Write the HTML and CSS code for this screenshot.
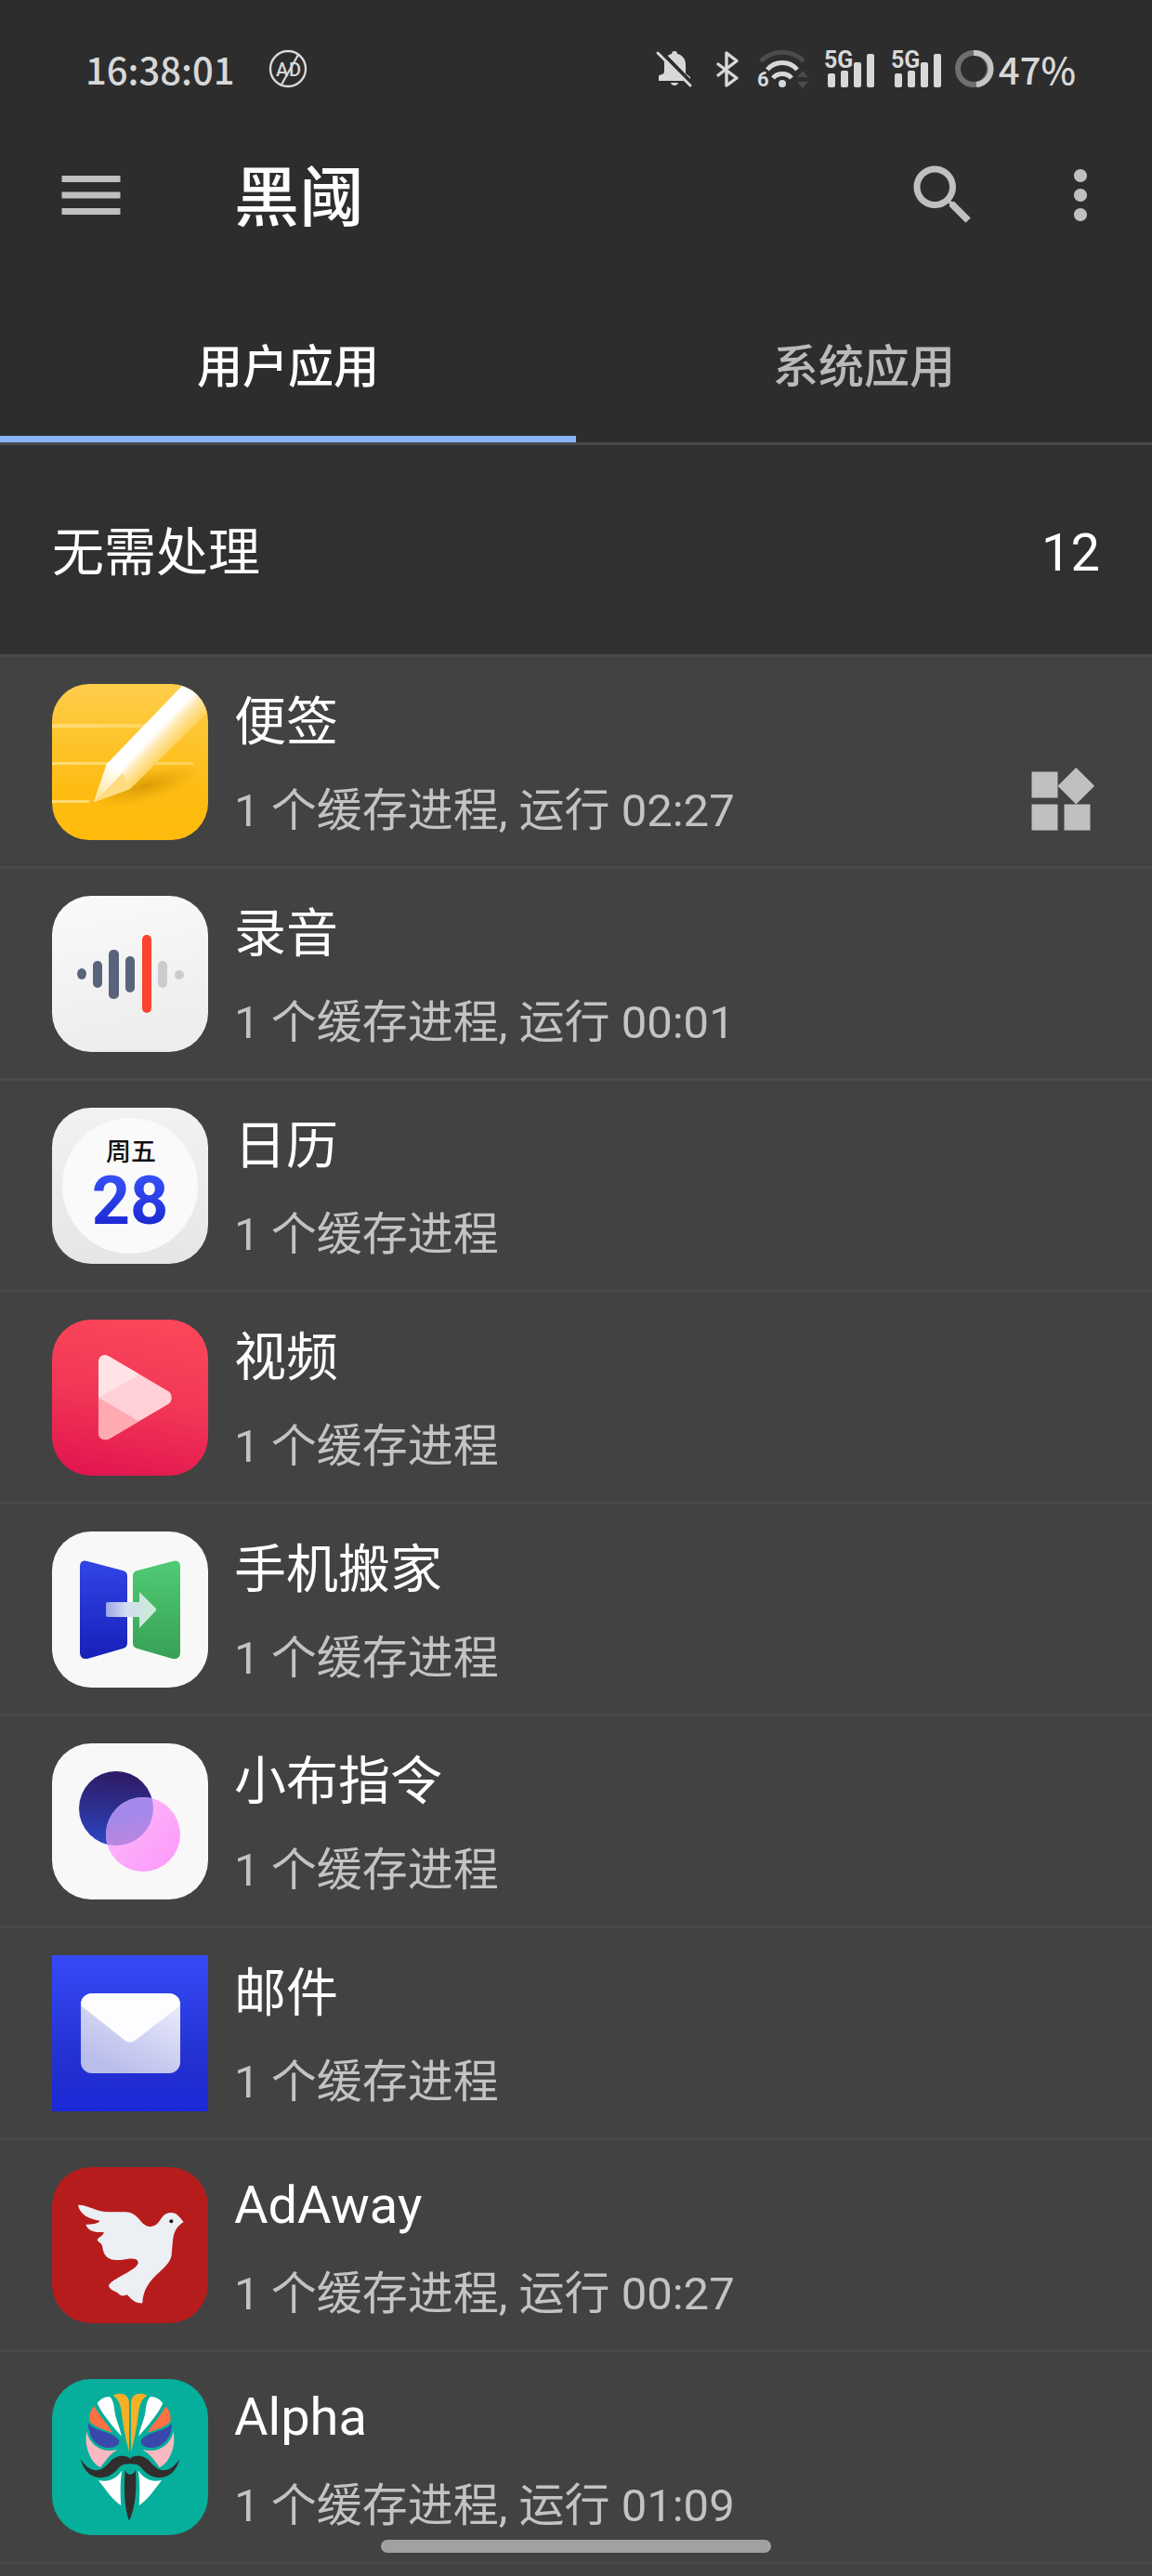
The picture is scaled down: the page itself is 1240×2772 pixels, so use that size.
FILE: index.html
```html
<!DOCTYPE html>
<html lang="zh-CN">

<head>
    <meta charset="UTF-8">
    <meta name="viewport" content="width=device-width, initial-scale=1.0">
    <title>黑阈</title>
    <link rel="stylesheet" href="styles.css">
</head>

<body>
    <!-- Status bar -->
    <div class="status-bar">
        <span class="clock">16:38:01</span>
        <svg class="ad-icon" width="42" height="42" viewBox="0 0 42 42">
            <circle cx="21" cy="21" r="19" fill="none" stroke="currentColor" stroke-width="2.4" />
            <path d="M14 38L32 6" stroke="currentColor" stroke-width="2.2" />
            <text x="8" y="29" font-size="20">A</text>
            <text x="22" y="29" font-size="20">D</text>
        </svg>

        <div class="status-icons">
            <svg class="bell" width="40" height="42" viewBox="0 0 40 42">
                <path d="M20 2c2 0 3 1 3 3 6 1 9 6 9 12v9l5 4v4H3v-5c0-2 6-1 6-5v-8c0-6 3-10 8-11 0-2 1-3 3-3z" fill="currentColor" />
                <path d="M16 36h8c-1 4-7 4-8 0z" fill="currentColor" />
                <path d="M4 1L40 38" stroke="#2d2d2d" stroke-width="4" />
                <path d="M2 4L37 39" stroke="currentColor" stroke-width="3" stroke-linecap="round" />
            </svg>
            <svg class="bluetooth" width="26" height="42" viewBox="0 0 26 42">
                <path d="M3 16L23 31L12 39V4L23 12.5L3 28" fill="none" stroke="currentColor" stroke-width="3.4" stroke-linejoin="round" stroke-linecap="round" />
            </svg>
            <svg class="wifi" width="56" height="42" viewBox="0 0 56 42">
                <g fill="none" stroke="currentColor" stroke-width="5">
                    <path d="M4 13c12-13 34-13 46 0" stroke="#4b4b4b" />
                    <path d="M11 22c8-10 24-10 32 0" />
                    <path d="M17 31c5-6 15-6 20 0" />
                </g>
                <circle cx="27" cy="37" r="4" fill="currentColor" />
                <text x="0" y="40" font-size="22" font-weight="700">6</text>
                <path d="M43 30l6-7 6 7zM43 35h12l-6 7z" fill="#4b4b4b" />
            </svg>
            <svg class="signal" width="56" height="42" viewBox="0 0 56 42">
                <text x="0" y="20" font-size="25" font-weight="700">5G</text>
                <g fill="currentColor">
                    <rect x="4" y="26" width="8" height="15" rx="2" />
                    <rect x="18" y="23" width="8" height="18" rx="2" />
                    <rect x="32" y="14" width="8" height="27" rx="2" />
                    <rect x="46" y="5" width="8" height="36" rx="2" />
                </g>
            </svg>
            <svg class="signal" width="56" height="42" viewBox="0 0 56 42">
                <text x="0" y="20" font-size="25" font-weight="700">5G</text>
                <g fill="currentColor">
                    <rect x="4" y="26" width="8" height="15" rx="2" />
                    <rect x="18" y="23" width="8" height="18" rx="2" />
                    <rect x="32" y="14" width="8" height="27" rx="2" />
                    <rect x="46" y="5" width="8" height="36" rx="2" />
                </g>
            </svg>
            <svg class="battery" width="42" height="42" viewBox="0 0 42 42">
                <circle cx="21" cy="21" r="17" fill="none" stroke="#6f6f6f" stroke-width="6" />
                <path d="M21 4a17 17 0 0 1 3 34" fill="none" stroke="#c4c4c4" stroke-width="6" />
            </svg>
            <span>47%</span>
        </div>
    </div>

    <!-- Toolbar -->
    <header class="toolbar">
        <button class="icon-button" aria-label="菜单">
            <svg width="84" height="84" viewBox="0 0 24 24"><path d="M3 18h18v-2H3v2zm0-5h18v-2H3v2zm0-7v2h18V6H3z" fill="currentColor" /></svg>
        </button>
        <h1>黑阈</h1>
        <button class="icon-button" aria-label="搜索">
            <svg width="84" height="84" viewBox="0 0 24 24"><path d="M15.5 14h-.79l-.28-.27C15.41 12.59 16 11.11 16 9.5 16 5.91 13.09 3 9.5 3S3 5.91 3 9.5 5.91 16 9.5 16c1.61 0 3.09-.59 4.23-1.57l.27.28v.79l5 4.99L20.49 19l-4.99-5zm-6 0C7.01 14 5 11.99 5 9.5S7.01 5 9.5 5 14 7.01 14 9.5 11.99 14 9.5 14z" fill="currentColor" /></svg>
        </button>
        <button class="icon-button more" aria-label="更多">
            <svg width="84" height="84" viewBox="0 0 24 24"><path d="M12 8c1.1 0 2-.9 2-2s-.9-2-2-2-2 .9-2 2 .9 2 2 2zm0 2c-1.1 0-2 .9-2 2s.9 2 2 2 2-.9 2-2-.9-2-2-2zm0 6c-1.1 0-2 .9-2 2s.9 2 2 2 2-.9 2-2-.9-2-2-2z" fill="currentColor" /></svg>
        </button>
    </header>

    <nav class="tabs" role="tablist">
        <button class="tab active" role="tab" aria-selected="true">用户应用</button>
        <button class="tab" role="tab" aria-selected="false">系统应用</button>
    </nav>

    <main>
        <div class="section-header">
            <h2>无需处理</h2>
            <span>12</span>
        </div>

        <ul class="app-list">
            <li class="app">
                <!-- Notes -->
                <svg class="app-icon" viewBox="0 0 168 168">
                    <defs>
                        <linearGradient id="notes-bg" x1="0" y1="0" x2="0" y2="1">
                            <stop offset="0" stop-color="#ffcd4b" />
                            <stop offset="0.65" stop-color="#fdbd14" />
                            <stop offset="1" stop-color="#ffbb0c" />
                        </linearGradient>
                        <linearGradient id="notes-pen" gradientUnits="userSpaceOnUse" x1="92" y1="52" x2="118" y2="77">
                            <stop offset="0" stop-color="#fff" />
                            <stop offset="0.4" stop-color="#fff" />
                            <stop offset="0.62" stop-color="#ffeab4" />
                            <stop offset="1" stop-color="#ffd568" />
                        </linearGradient>
                        <linearGradient id="notes-tip" gradientUnits="userSpaceOnUse" x1="70" y1="90" x2="45" y2="127">
                            <stop offset="0" stop-color="#fff" />
                            <stop offset="1" stop-color="#ffe08a" />
                        </linearGradient>
                        <linearGradient id="notes-line" x1="0" y1="0" x2="1" y2="0">
                            <stop offset="0" stop-color="#ffdc76" />
                            <stop offset="1" stop-color="#ffd35a" />
                        </linearGradient>
                        <radialGradient id="notes-shadow">
                            <stop offset="0" stop-color="#c98d00" stop-opacity="0.7" />
                            <stop offset="1" stop-color="#d99b00" stop-opacity="0" />
                        </radialGradient>
                        <clipPath id="notes-clip"><rect width="168" height="168" rx="40" /></clipPath>
                    </defs>
                    <g clip-path="url(#notes-clip)">
                        <rect width="168" height="168" fill="url(#notes-bg)" />
                        <path d="M0 43h102v4H0zM0 84h152v3H0zM0 125h40v3H0z" fill="url(#notes-line)" />
                        <ellipse cx="100" cy="110" rx="60" ry="17" transform="rotate(-16 100 110)" fill="url(#notes-shadow)" />
                        <path d="M45 127L59 86L140 2L180 18L84 113Z" fill="url(#notes-pen)" />
                        <path d="M45 127L59 86L76 94Z" fill="url(#notes-tip)" />
                        <path d="M45 127L76 96L84 113Z" fill="#ffdb80" />
                    </g>
                </svg>
                <div class="app-text">
                    <h3>便签</h3>
                    <p>1 个缓存进程, 运行 02:27</p>
                </div>
                <svg class="widget-icon" width="84" height="84" viewBox="0 0 24 24"><path d="M13 13v8h8v-8h-8zM3 21h8v-8H3v8zM3 3v8h8V3H3zm13.66-1.31L11 7.34 16.66 13l5.66-5.66-5.66-5.65z" fill="currentColor" /></svg>
            </li>

            <li class="app">
                <!-- Recorder -->
                <svg class="app-icon" viewBox="0 0 168 168">
                    <linearGradient id="rec-bg" x1="0" y1="0" x2="0.2" y2="1">
                        <stop offset="0" stop-color="#fafafa" />
                        <stop offset="1" stop-color="#ededee" />
                    </linearGradient>
                    <rect width="168" height="168" rx="42" fill="url(#rec-bg)" />
                    <g fill="#59647c">
                        <ellipse cx="32" cy="84" rx="5" ry="6" />
                        <rect x="44" y="70" width="10" height="29" rx="5" />
                        <rect x="61" y="58" width="11" height="53" rx="5" />
                        <rect x="79" y="65" width="10" height="39" rx="5" />
                    </g>
                    <rect x="97" y="42" width="10" height="84" rx="5" fill="#fb432f" />
                    <g fill="#cbcbd0">
                        <rect x="114" y="70" width="10" height="29" rx="5" />
                        <circle cx="137" cy="85" r="5" />
                    </g>
                </svg>
                <div class="app-text">
                    <h3>录音</h3>
                    <p>1 个缓存进程, 运行 00:01</p>
                </div>
            </li>

            <li class="app">
                <!-- Calendar -->
                <svg class="app-icon" viewBox="0 0 168 168">
                    <defs>
                        <linearGradient id="cal-bg" x1="0" y1="0" x2="0" y2="1">
                            <stop offset="0" stop-color="#f2f2f2" />
                            <stop offset="1" stop-color="#e6e6e6" />
                        </linearGradient>
                        <linearGradient id="cal-num" x1="0" y1="0" x2="0" y2="1">
                            <stop offset="0.2" stop-color="#3450f5" />
                            <stop offset="0.8" stop-color="#1d29d2" />
                        </linearGradient>
                    </defs>
                    <rect width="168" height="168" rx="42" fill="url(#cal-bg)" />
                    <circle cx="84" cy="84" r="73" fill="#fafafb" />
                    <text class="cal-day" x="85" y="57" font-size="27" text-anchor="middle">周五</text>
                    <text x="84" y="125" font-size="72" font-weight="700" text-anchor="middle" fill="url(#cal-num)">28</text>
                </svg>
                <div class="app-text">
                    <h3>日历</h3>
                    <p>1 个缓存进程</p>
                </div>
            </li>

            <li class="app">
                <!-- Video -->
                <svg class="app-icon" viewBox="0 0 168 168">
                    <defs>
                        <linearGradient id="video-bg" x1="0.6" y1="0" x2="0.4" y2="1">
                            <stop offset="0" stop-color="#fb4659" />
                            <stop offset="0.5" stop-color="#f23757" />
                            <stop offset="1" stop-color="#e2174f" />
                        </linearGradient>
                        <clipPath id="video-clip"><path d="M50 46C50 39 56 36 62 40L125 77C130 80 130 88 125 91L62 128C56 131 50 128 50 122Z" /></clipPath>
                    </defs>
                    <rect width="168" height="168" rx="42" fill="url(#video-bg)" />
                    <g clip-path="url(#video-clip)">
                        <path d="M50 30h84v110H50z" fill="#ffd0d6" />
                        <path d="M50 30h60L91 61L50 84z" fill="#ffe3e7" />
                        <path d="M50 84L93 109L80 140H50z" fill="#ffa9b3" />
                    </g>
                </svg>
                <div class="app-text">
                    <h3>视频</h3>
                    <p>1 个缓存进程</p>
                </div>
            </li>

            <li class="app">
                <!-- Clone phone -->
                <svg class="app-icon" viewBox="0 0 168 168">
                    <defs>
                        <linearGradient id="move-blue" x1="0" y1="0" x2="0" y2="1">
                            <stop offset="0" stop-color="#3145e6" />
                            <stop offset="1" stop-color="#1720b8" />
                        </linearGradient>
                        <linearGradient id="move-green" x1="0" y1="0" x2="0" y2="1">
                            <stop offset="0" stop-color="#4fcb74" />
                            <stop offset="1" stop-color="#38a055" />
                        </linearGradient>
                        <linearGradient id="move-arrow" x1="0" y1="0" x2="1" y2="0">
                            <stop offset="0" stop-color="#9ba4e8" />
                            <stop offset="0.4" stop-color="#d3dcf0" />
                            <stop offset="1" stop-color="#c9efd4" />
                        </linearGradient>
                    </defs>
                    <rect width="168" height="168" rx="42" fill="#f8f8f9" />
                    <path d="M30 38Q30 30 38 32L76 42Q81 43 81 48V120Q81 125 76 126L38 137Q30 138 30 130Z" fill="url(#move-blue)" />
                    <path d="M138 38Q138 30 130 32L92 42Q87 43 87 48V120Q87 125 92 126L130 137Q138 138 138 130Z" fill="url(#move-green)" />
                    <path d="M60 76H94V65L112 83Q112 84 112 85L94 104V92H60Q58 92 58 90V78Q58 76 60 76Z" fill="url(#move-arrow)" />
                </svg>
                <div class="app-text">
                    <h3>手机搬家</h3>
                    <p>1 个缓存进程</p>
                </div>
            </li>

            <li class="app">
                <!-- Shortcuts -->
                <svg class="app-icon" viewBox="0 0 168 168">
                    <defs>
                        <linearGradient id="cmd-blue" x1="0.5" y1="0" x2="0.4" y2="1">
                            <stop offset="0" stop-color="#2f1a64" />
                            <stop offset="0.5" stop-color="#2c2f8f" />
                            <stop offset="1" stop-color="#2c47c4" />
                        </linearGradient>
                        <linearGradient id="cmd-pink" x1="0" y1="0" x2="1" y2="1">
                            <stop offset="0" stop-color="#ffbdf8" />
                            <stop offset="1" stop-color="#fb97fa" />
                        </linearGradient>
                        <linearGradient id="cmd-mix" x1="0.4" y1="0" x2="0.6" y2="1">
                            <stop offset="0.2" stop-color="#a489ea" />
                            <stop offset="0.7" stop-color="#bf86dc" />
                        </linearGradient>
                        <clipPath id="cmd-clip"><circle cx="69" cy="70" r="40" /></clipPath>
                    </defs>
                    <rect width="168" height="168" rx="42" fill="#f8f8f9" />
                    <circle cx="69" cy="70" r="40" fill="url(#cmd-blue)" />
                    <circle cx="98" cy="98" r="40" fill="url(#cmd-pink)" />
                    <circle cx="98" cy="98" r="40" fill="url(#cmd-mix)" clip-path="url(#cmd-clip)" />
                </svg>
                <div class="app-text">
                    <h3>小布指令</h3>
                    <p>1 个缓存进程</p>
                </div>
            </li>

            <li class="app">
                <!-- Mail -->
                <svg class="app-icon" viewBox="0 0 168 168">
                    <defs>
                        <linearGradient id="mail-bg" x1="0" y1="0" x2="0" y2="1">
                            <stop offset="0" stop-color="#374af8" />
                            <stop offset="0.7" stop-color="#2230cf" />
                            <stop offset="1" stop-color="#1b28d8" />
                        </linearGradient>
                        <linearGradient id="mail-body" x1="0.9" y1="0.2" x2="0.4" y2="1">
                            <stop offset="0" stop-color="#e6e7fa" />
                            <stop offset="1" stop-color="#b9bdea" />
                        </linearGradient>
                        <clipPath id="mail-clip"><rect x="31" y="41" width="107" height="86" rx="12" /></clipPath>
                    </defs>
                    <rect width="168" height="168" fill="url(#mail-bg)" />
                    <g clip-path="url(#mail-clip)">
                        <rect x="31" y="41" width="107" height="86" fill="url(#mail-body)" />
                        <path d="M31 41H138V54L89 92Q84 95 79 92L31 54Z" fill="#fdfdff" />
                    </g>
                </svg>
                <div class="app-text">
                    <h3>邮件</h3>
                    <p>1 个缓存进程</p>
                </div>
            </li>

            <li class="app">
                <!-- AdAway -->
                <svg class="app-icon" viewBox="48 33 504 504">
                    <rect x="48" y="33" width="504" height="504" rx="126" fill="#b71c1c" />
                    <path d="M132 155C165 154 190 178 232 178L285 178C332 180 332 225 365 225C400 225 396 180 432 180C452 180 460 195 473 210C435 235 440 260 434 318C425 368 344 385 340 472C315 475 302 456 290 445C280 450 268 450 262 440C250 432 235 432 231 415C245 390 328 365 326 340C323 324 300 328 270 333C222 336 215 315 210 287C205 275 196 276 194 268C198 258 215 255 215 243C185 245 163 238 157 218C175 218 200 215 202 206C170 200 138 188 132 155Z" fill="#eceff4" />
                    <circle cx="433" cy="208" r="6" fill="#111" />
                </svg>
                <div class="app-text">
                    <h3>AdAway</h3>
                    <p>1 个缓存进程, 运行 00:27</p>
                </div>
            </li>

            <li class="app">
                <!-- Alpha, the left half of the mask is mirrored to the right -->
                <svg class="app-icon" viewBox="48 27 504 504">
                    <defs>
                        <g id="mask">
                            <path d="M245 80C270 68 297 75 297 105V262C285 220 278 180 273 140C270 110 262 90 245 80Z" fill="#f6b026" />
                            <path d="M194 105C205 90 222 82 235 85C245 95 248 110 250 130C254 160 268 185 272 212C245 180 212 145 194 105Z" fill="#fff" />
                            <path d="M185 115C200 145 225 170 244 200C220 192 190 185 170 165C167 145 172 128 185 115Z" fill="#ff7043" />
                            <path d="M165 170C195 202 240 192 265 225C268 240 250 250 228 249C190 245 165 215 165 170Z" fill="#3949ab" />
                            <path d="M160 197C170 240 210 268 260 255C235 270 225 285 205 312C175 300 150 245 160 197Z" fill="#f8b9c2" />
                            <path d="M140 286C175 335 205 330 235 295C255 270 290 272 300 285V300C290 305 275 297 262 315C230 358 160 362 140 286Z" fill="#322d2d" />
                            <path d="M198 354C230 362 255 350 274 322C268 355 268 395 271 435C245 420 222 385 198 354Z" fill="#fff" />
                        </g>
                    </defs>
                    <rect x="48" y="27" width="504" height="504" rx="126" fill="#05af9b" />
                    <use href="#mask" />
                    <use href="#mask" transform="matrix(-1 0 0 1 600 0)" />
                    <path d="M284 320C290 340 310 340 318 320C322 380 318 440 297 485C280 440 280 380 284 320Z" fill="#322d2d" />
                </svg>
                <div class="app-text">
                    <h3>Alpha</h3>
                    <p>1 个缓存进程, 运行 01:09</p>
                </div>
            </li>
        </ul>
    </main>

    <div class="home-bar"></div>
</body>

</html>
```

FILE: styles.css
```css
* {
    box-sizing: border-box;
}

body {
    margin: 0;
    min-height: 100vh;
    background: #424242;
    color: #fff;
    font-family: Roboto, "Noto Sans CJK SC", sans-serif;
}

h1, h2, h3, p, ul {
    margin: 0;
    padding: 0;
    font-weight: 400;
}

svg {
    display: block;
    flex: none;
    overflow: visible;
}

button {
    margin: 0;
    padding: 0;
    border: 0;
    background: none;
    font-family: inherit;
}

/* Status bar */
.status-bar {
    display: flex;
    align-items: center;
    height: 112px;
    padding: 36px 82px 0 92px;
    background: #2d2d2d;
    color: #d8d8d8;
    font-family: "Noto Sans CJK SC", sans-serif;
    font-size: 40px;
    font-weight: 500;
    line-height: 60px;
}

.status-bar text {
    fill: currentColor;
    font-family: Roboto, sans-serif;
}

.ad-icon {
    margin-left: 36px;
}

.status-icons {
    display: flex;
    align-items: center;
    margin-left: auto;
}

.bluetooth {
    margin-left: 24px;
}

.wifi {
    margin-left: 19px;
}

.signal {
    margin-left: 16px;
}

.battery {
    margin: 0 6px 0 12px;
}

/* Toolbar */
.toolbar {
    display: flex;
    align-items: center;
    height: 196px;
    padding: 0 35px 0 56px;
    background: #2d2d2d;
}

.toolbar h1 {
    flex: 1;
    margin-left: 112px;
    padding-top: 8px;
    font-size: 70px;
    font-weight: 500;
    line-height: 96px;
}

.icon-button {
    color: #c0c0c0;
}

.more {
    margin-left: 64px;
}

/* Tabs */
.tabs {
    display: flex;
    border-bottom: 3px solid #4a4a4a;
    background: #2d2d2d;
}

.tab {
    flex: 1;
    height: 168px;
    border-top: 4px solid transparent;
    border-bottom: 7px solid transparent;
    color: #bababa;
    font-size: 49px;
    font-weight: 500;
}

.tab.active {
    border-bottom-color: #8ab4f8;
    color: #fff;
}

/* App list */
.section-header {
    display: flex;
    align-items: center;
    justify-content: space-between;
    height: 228px;
    padding: 6px 56px 0;
    border-bottom: 3px solid #484848;
    background: #303030;
    font-size: 56px;
    line-height: 80px;
}

.section-header h2 {
    font-size: 56px;
}

.app-list {
    list-style: none;
}

.app {
    display: flex;
    align-items: center;
    height: 228px;
    padding: 0 56px;
    border-bottom: 3px solid #4a4a4a;
}

.app-icon {
    width: 168px;
    height: 168px;
}

.app-text {
    flex: 1;
    margin-left: 28px;
    padding-top: 6px;
}

.app-text h3 {
    margin-bottom: 20px;
    font-size: 56px;
    line-height: 80px;
}

.app-text p {
    color: #c3c3c3;
    font-size: 49px;
    line-height: 72px;
}

.widget-icon {
    align-self: flex-end;
    margin-bottom: 28px;
    color: #c0c0c0;
}

.cal-day {
    fill: #111;
    font-family: "Noto Sans CJK SC", sans-serif;
    font-weight: 500;
}

.home-bar {
    position: fixed;
    bottom: 25px;
    left: 50%;
    width: 420px;
    height: 14px;
    margin-left: -210px;
    border-radius: 7px;
    background: #a1a1a1;
}
```
